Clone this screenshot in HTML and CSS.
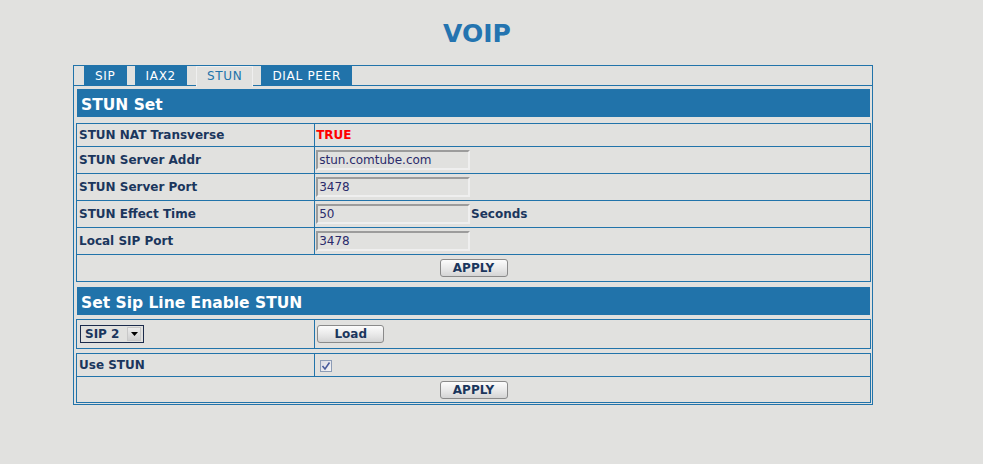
FILE: index.html
```html
<!DOCTYPE html>
<html lang="en">
<head>
    <meta charset="UTF-8">
    <meta name="viewport" content="width=device-width, initial-scale=1.0">
    <title>VOIP</title>
    <link rel="stylesheet" href="styles.css">
</head>
<body>
    <div class="page">
        <h1 class="page-title">VOIP</h1>

        <div class="panel">
            <div class="tabs">
                <a class="tab">SIP</a>
                <a class="tab">IAX2</a>
                <a class="tab active">STUN</a>
                <a class="tab">DIAL PEER</a>
            </div>

            <div class="panel-body">
                <!-- STUN 설정 -->
                <div class="section-title">STUN Set</div>
                <table class="form-table table-stun">
                    <tr class="row-short">
                        <td class="label">STUN NAT Transverse</td>
                        <td class="value"><span class="state-true">TRUE</span></td>
                    </tr>
                    <tr>
                        <td class="label">STUN Server Addr</td>
                        <td class="value"><input class="text-input" type="text" value="stun.comtube.com"></td>
                    </tr>
                    <tr>
                        <td class="label">STUN Server Port</td>
                        <td class="value"><input class="text-input" type="text" value="3478"></td>
                    </tr>
                    <tr>
                        <td class="label">STUN Effect Time</td>
                        <td class="value"><input class="text-input" type="text" value="50"> <span class="unit">Seconds</span></td>
                    </tr>
                    <tr>
                        <td class="label">Local SIP Port</td>
                        <td class="value"><input class="text-input" type="text" value="3478"></td>
                    </tr>
                    <tr>
                        <td class="actions" colspan="2"><button class="btn">APPLY</button></td>
                    </tr>
                </table>

                <!-- 라인별 STUN 사용 -->
                <div class="section-title section-line">Set Sip Line Enable STUN</div>
                <table class="form-table table-line">
                    <tr class="row-select">
                        <td class="label">
                            <span class="select-box">
                                <select class="select">
                                    <option>SIP 1</option>
                                    <option selected>SIP 2</option>
                                </select>
                                <span class="select-arrow">
                                    <svg width="7" height="4" viewBox="0 0 7 4"><polygon points="0,0 7,0 3.5,4" fill="#000"/></svg>
                                </span>
                            </span>
                        </td>
                        <td class="value"><button class="btn btn-load">Load</button></td>
                    </tr>
                </table>
                <table class="form-table table-last">
                    <tr class="row-check">
                        <td class="label">Use STUN</td>
                        <td class="value">
                            <span class="checkbox">
                                <svg width="10" height="10" viewBox="0 0 10 10"><path d="M1.5 5 L4 8 L8.5 1.5" fill="none" stroke="#4a5c9c" stroke-width="1.6"/></svg>
                            </span>
                        </td>
                    </tr>
                    <tr class="row-last">
                        <td class="actions" colspan="2"><button class="btn">APPLY</button></td>
                    </tr>
                </table>
            </div>
        </div>
    </div>
</body>
</html>
```

FILE: styles.css
```css
body {
    margin: 0;
    background-color: #e1e1df;
    font-family: "DejaVu Sans", Verdana, sans-serif;
    font-size: 12px;
    color: #1b365d;
}
.page {
    width: 800px;
    margin-left: 73px;
    padding-top: 20px;
}
.page-title {
    margin: 0 0 17px;
    padding-left: 8px;
    text-align: center;
    font-size: 25px;
    line-height: 28px;
    color: #2474b0;
}
.panel {
    border: 1px solid #2173aa;
}
.tabs {
    display: flex;
    align-items: flex-start;
    height: 19px;
    padding-left: 10px;
    border-bottom: 1px solid #2173aa;
}
.tab {
    margin-right: 8px;
    padding: 2px 11px 0;
    line-height: 17px;
    letter-spacing: 0.7px;
    background-color: #2173aa;
    color: #fff;
    cursor: pointer;
}
.tab.active {
    height: 19px;
    margin-left: 1px;
    padding: 1px 10px 0;
    border: 1px solid #efefef;
    border-bottom: 0;
    background-color: #e1e1df;
    color: #2173aa;
}
.panel-body {
    padding: 3px 1px 1px 2px;
}
.section-title {
    height: 24px;
    margin: 0 1px 6px;
    padding: 4px 0 0 4px;
    line-height: 24px;
    background-color: #2173aa;
    color: #fff;
    font-size: 15.5px;
    font-weight: bold;
}
.section-line {
    margin-bottom: 4px;
}
.form-table {
    width: 100%;
    border-collapse: collapse;
}
.form-table td {
    height: 26px;
    padding: 0;
    border: 1px solid #2173aa;
    vertical-align: middle;
}
.form-table .row-short td {
    height: 22px;
}
.form-table .row-select td {
    height: 28px;
}
.form-table .row-check td {
    height: 22px;
}
.form-table .row-last td {
    height: 25px;
}
.table-stun {
    margin-bottom: 5px;
}
.table-line {
    margin-bottom: 4px;
}
.label {
    width: 30%;
    padding-left: 2px !important;
    font-weight: bold;
}
.value {
    padding-left: 1px !important;
}
.state-true {
    color: #f00;
    font-weight: bold;
}
.unit {
    margin-left: -3px;
    font-weight: bold;
}
.text-input {
    box-sizing: border-box;
    width: 154px;
    height: 20px;
    margin: 0;
    padding: 0 1px;
    border: 2px solid;
    border-color: #9c9c9c #efefef #efefef #9c9c9c;
    background-color: #e1e1df;
    font-family: "DejaVu Sans", Verdana, sans-serif;
    font-size: 12px;
    color: #2b2b6b;
    vertical-align: middle;
}
.actions {
    text-align: center;
}
.btn {
    box-sizing: border-box;
    width: 68px;
    height: 18px;
    padding: 0;
    border: 1px solid #8a8a8a;
    border-radius: 3px;
    background: linear-gradient(#fcfcfc, #e6e6e6 60%, #d4d4d4);
    font-family: "DejaVu Sans", Verdana, sans-serif;
    font-size: 12px;
    font-weight: bold;
    line-height: 16px;
    color: #1b365d;
    vertical-align: middle;
}
.btn-load {
    width: 67px;
    margin-left: 1px;
}
.select-box {
    display: inline-flex;
    align-items: center;
    box-sizing: border-box;
    width: 64px;
    height: 18px;
    margin-left: 1px;
    border: 1px solid #1c2b4b;
    background-color: #e1e1df;
    vertical-align: middle;
}
.select {
    flex: 1;
    min-width: 0;
    padding: 0 0 0 4px;
    border: 0;
    background: transparent;
    font-family: "DejaVu Sans", Verdana, sans-serif;
    font-size: 12px;
    font-weight: bold;
    color: #1b365d;
    appearance: none;
    outline: none;
}
.select-arrow {
    display: flex;
    align-items: center;
    justify-content: center;
    box-sizing: border-box;
    width: 14px;
    height: 14px;
    margin-right: 2px;
    border: 1px solid #c8c8c8;
    background: linear-gradient(#ececec, #cfcfcf);
}
.checkbox {
    display: inline-flex;
    align-items: center;
    justify-content: center;
    box-sizing: border-box;
    width: 12px;
    height: 12px;
    margin-left: 4px;
    border: 1px solid #8c9cb6;
    background: linear-gradient(135deg, #dcdce4, #f4f4f6);
    vertical-align: middle;
}
```
